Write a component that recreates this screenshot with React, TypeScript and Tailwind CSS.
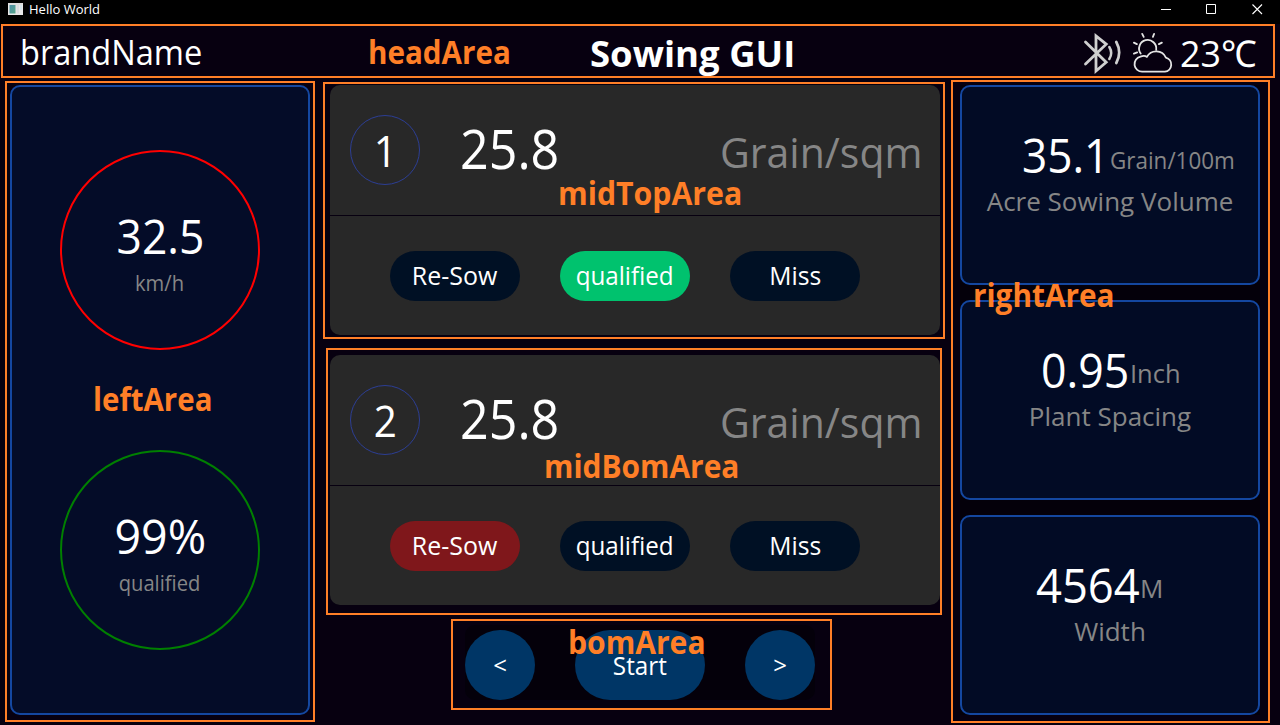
import type { ReactNode } from "react";

function Fit({ className, children }: { className: string; children: ReactNode }) {
  return <span className={"block whitespace-pre " + className}>{children}</span>;
}

function TitleBar() {
  return (
    <div className="flex h-6 shrink-0 items-start justify-between bg-black pl-2">
      <div className="flex items-start gap-[6px] pt-px">
        <svg className="mt-[2px]" width="15" height="12" viewBox="0 0 15 12">
          <defs>
            <linearGradient id="pane" x1="0" y1="0" x2="1" y2="1">
              <stop offset="0" stopColor="#4f8fa8" />
              <stop offset="1" stopColor="#55a588" />
            </linearGradient>
          </defs>
          <rect width="15" height="12" fill="#e8e8e8" />
          <rect x="0.5" y="0.5" width="14" height="1" fill="#cfcfcf" />
          <rect x="1.5" y="2" width="6" height="8.5" fill="url(#pane)" />
          <rect x="8.5" y="2" width="2.5" height="8.5" fill="#d9dbe0" />
          <rect x="12" y="2" width="2" height="5" fill="#d4e4ea" />
        </svg>
        <span className="text-[13px] leading-[17px]">Hello World</span>
      </div>
      <svg width="119" height="24" viewBox="0 0 119 24" fill="none" stroke="#fff">
        <path d="M0 9.5h10" />
        <path d="M45.5 4.5h9v9h-9z" />
        <path d="M91.5 4.500l9.500 9.500M101 4.500l-9.500 9.500" strokeWidth="1.100" />
      </svg>
    </div>
  );
}

function Header() {
  return (
    <header className="flex h-[61px] shrink-0 items-start justify-between pl-5 pr-[20px]">
      <div className="w-[570px]">
        <Fit className="origin-left scale-x-[0.958] text-[34px] leading-[56px]">brandName</Fit>
      </div>
      <h1 className="flex-1">
        <Fit className="origin-left scale-x-[1.014] text-[36px] leading-[60px] font-bold">Sowing GUI</Fit>
      </h1>
      <div className="flex pt-[7px]">
        <svg width="40" height="44" viewBox="0 0 40 44" fill="none" stroke="#cfcfcf" strokeWidth="2.8" strokeLinecap="round" strokeLinejoin="miter">
          <path d="M3.500 11L24.200 31.300 14 40V5L24.200 13.200 3.500 33" />
          <path d="M27.300 16q3.800 6 0 12" strokeWidth="2.500" />
          <path d="M34.300 11q5.800 10.500 0 21" strokeWidth="2.700" />
        </svg>
        <svg className="ml-[8px]" width="44" height="44" viewBox="0 0 44 44" fill="none" stroke="#e4e4e4" strokeWidth="1.8" strokeLinecap="round" strokeLinejoin="round">
          <g transform="translate(0.4 0.4)">
            <path d="M12 40.300a7.600 7.600 0 0 1-2-15q4-1.600 6.500 0.200a10.600 10.600 0 0 1 19 0.700a7.200 7.200 0 0 1-1 14.100z" />
            <path d="M10.300 22.200a8.600 8.600 0 1 1 15.500-3.800" />
            <path d="M13.300 5.500l-1.500-3M22.500 5.500l1.200-3M6.500 12.700l-3-1.500M28.500 12.700l3-1.500M6.800 21l-3.300 1.200" />
          </g>
        </svg>
        <Fit className="ml-[6px] mt-[-7px] w-[80px] origin-left scale-x-[0.968] text-[37px] leading-[58px]">23℃</Fit>
      </div>
    </header>
  );
}

function Gauge({ ring, value, valueFit, label }: { ring: string; value: string; valueFit: string; label: string }) {
  return (
    <div className={"flex size-[200px] flex-col items-center rounded-full border-2 pt-[57px] " + ring}>
      <Fit className={"text-[48px] leading-[54px] " + valueFit}>{value}</Fit>
      <Fit className="mt-[5px] scale-x-[0.960] text-[21px] leading-[30px] text-[#868686]">{label}</Fit>
    </div>
  );
}

function LeftArea() {
  return (
    <aside className="flex h-[630px] w-[300px] flex-col items-center gap-[100px] rounded-[10px] border-2 border-[#1447a0] bg-[#040c28] pt-[63px]">
      <Gauge ring="border-[#ff0000]" value="32.5" valueFit="scale-x-[0.925]" label="km/h" />
      <Gauge ring="border-[#008000]" value="99%" valueFit="scale-x-[0.970]" label="qualified" />
    </aside>
  );
}

function Pill({ color, fit, children }: { color: string; fit: string; children: string }) {
  return (
    <button className={"flex h-[50px] w-[130px] items-center justify-center rounded-full " + color}>
      <Fit className={"-mt-[2px] text-[26px] leading-[48px] " + fit}>{children}</Fit>
    </button>
  );
}

function RowCard({ index, sow, ok }: { index: string; sow: string; ok: string }) {
  return (
    <section className="flex h-[250px] w-[610px] flex-col overflow-hidden rounded-[10px] bg-[#282828]">
      <div className="flex h-[130px] items-center pl-5">
        <div className="flex size-[70px] items-center justify-center rounded-full border border-[#2c3e94]">
          <Fit className="mt-[1px] scale-x-[0.940] text-[43px] leading-[60px]">{index}</Fit>
        </div>
        <Fit className="ml-10 -mt-[5px] w-[260px] origin-left scale-x-[0.930] text-[54px] leading-[70px]">25.8</Fit>
        <Fit className="mt-[3px] origin-left scale-x-[0.976] text-[42px] leading-[60px] text-[#868686]">Grain/sqm</Fit>
      </div>
      <div className="h-px bg-[#070010]" />
      <div className="flex gap-10 pl-[60px] pt-[35px]">
        <Pill color={sow} fit="scale-x-[0.960]">Re-Sow</Pill>
        <Pill color={ok} fit="scale-x-[0.930]">qualified</Pill>
        <Pill color="bg-[#001024]" fit="scale-x-[0.950]">Miss</Pill>
      </div>
    </section>
  );
}

function ControlBar() {
  return (
    <div className="mt-5 ml-[135px] flex h-[75px] w-[350px] items-start gap-10 rounded-[10px] bg-[#04000a] pt-[5px]">
      <button className="flex size-[70px] shrink-0 items-center justify-center rounded-full bg-[#003666]">
        <span className="text-[24px] leading-[60px]">&lt;</span>
      </button>
      <button className="flex h-[70px] w-[130px] shrink-0 items-center justify-center rounded-full bg-[#003666]">
        <span className="scale-x-[0.970] text-[25px] leading-[60px]">Start</span>
      </button>
      <button className="flex size-[70px] shrink-0 items-center justify-center rounded-full bg-[#003666]">
        <span className="text-[24px] leading-[60px]">&gt;</span>
      </button>
    </div>
  );
}

function Metric({ pad, value, valueBox, unit, unitFit, label }: { pad: string; value: string; valueBox: string; unit: string; unitFit: string; label: string }) {
  return (
    <section className="h-[200px] w-[300px] rounded-[10px] border-2 border-[#1447a0] bg-[#020b25] pt-[38px]">
      <div className={"flex h-[59px] items-start " + pad}>
        <Fit className={"origin-left text-[48px] leading-[60px] " + valueBox}>{value}</Fit>
        <Fit className={"origin-left text-[#868686] " + unitFit}>{unit}</Fit>
      </div>
      <div className="flex justify-center">
        <Fit className="text-[26px] leading-[34px] text-[#868686]">{label}</Fit>
      </div>
    </section>
  );
}

function RightArea() {
  return (
    <aside className="flex w-[300px] flex-col gap-[15px] bg-[#04000a]">
      <Metric pad="pl-[60px]" value="35.1" valueBox="w-[88px] scale-x-[0.920]" unit="Grain/100m" unitFit="text-[24px] leading-[70px] scale-x-[0.935]" label="Acre Sowing Volume" />
      <Metric pad="pl-[79px]" value="0.95" valueBox="w-[89px] scale-x-[0.930]" unit="Inch" unitFit="text-[26px] leading-[66px] scale-x-[0.980]" label="Plant Spacing" />
      <Metric pad="pl-[74px]" value="4564" valueBox="w-[104px] scale-x-[0.945]" unit="M" unitFit="text-[26px] leading-[66px]" label="Width" />
    </aside>
  );
}

function Tag({ place, children }: { place: string; children: string }) {
  return (
    <span className={"absolute origin-left text-[32px] leading-[44px] font-bold text-[#ff7f27] " + place}>
      {children}
    </span>
  );
}

function Annotations() {
  return (
    <div className="pointer-events-none absolute inset-0">
      <div className="absolute left-[1px] top-[24px] h-[54px] w-[1274px] border-2 border-[#ff7f27]" />
      <div className="absolute left-[5px] top-[81px] h-[641px] w-[310px] border-2 border-[#ff7f27]" />
      <div className="absolute left-[323px] top-[82px] h-[257px] w-[622px] border-2 border-[#ff7f27]" />
      <div className="absolute left-[326px] top-[348px] h-[267px] w-[616px] border-2 border-[#ff7f27]" />
      <div className="absolute left-[451px] top-[619px] h-[91px] w-[381px] border-2 border-[#ff7f27]" />
      <div className="absolute left-[951px] top-[80px] h-[643px] w-[319px] border-2 border-[#ff7f27]" />
      <Tag place="left-[368px] top-[30px] scale-x-[0.925]">headArea</Tag>
      <Tag place="left-[93px] top-[377px] scale-x-[0.920]">leftArea</Tag>
      <Tag place="left-[558px] top-[171px] scale-x-[0.945]">midTopArea</Tag>
      <Tag place="left-[544px] top-[444px] scale-x-[0.935]">midBomArea</Tag>
      <Tag place="left-[568px] top-[620px] scale-x-[0.940]">bomArea</Tag>
      <Tag place="left-[973px] top-[273px] scale-x-[0.930]">rightArea</Tag>
    </div>
  );
}

export default function App() {
  return (
    <div className="relative flex h-[725px] w-[1280px] flex-col overflow-hidden bg-[#070010] font-['Open_Sans','Noto_Sans','Noto_Sans_CJK_SC',sans-serif] text-white">
      <TitleBar />
      <Header />
      <main className="flex h-[630px] gap-5 pl-[10px]">
        <LeftArea />
        <div className="flex w-[610px] flex-col">
          <RowCard index="1" sow="bg-[#001024]" ok="bg-[#00c26e]" />
          <div className="mt-5">
            <RowCard index="2" sow="bg-[#7f171b]" ok="bg-[#001024]" />
          </div>
          <ControlBar />
        </div>
        <RightArea />
      </main>
      <Annotations />
    </div>
  );
}
